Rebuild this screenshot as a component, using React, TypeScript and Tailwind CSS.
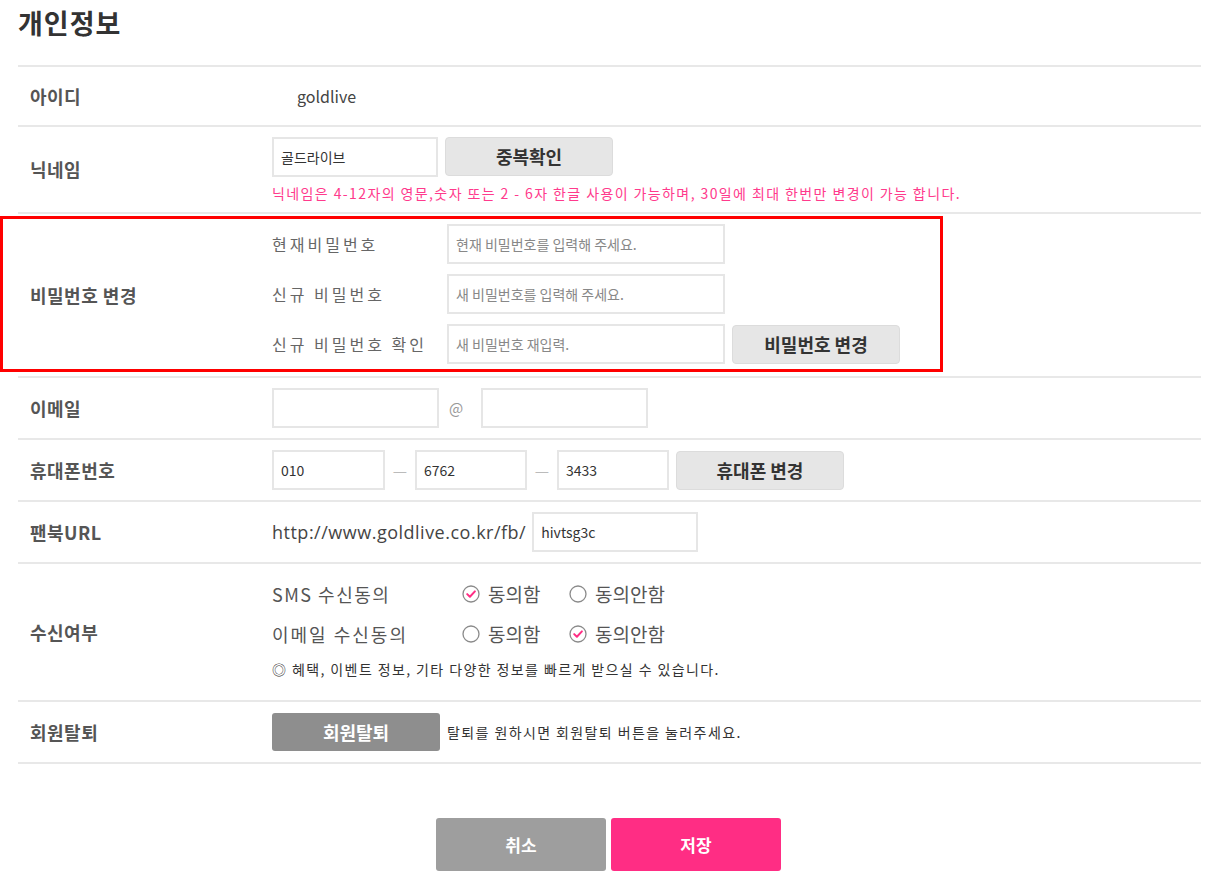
import React from 'react'

const font = { fontFamily: '"Noto Sans CJK KR", "Noto Sans", sans-serif' }

function Radio({ checked }: { checked: boolean }) {
  return (
    <svg width="18" height="18" viewBox="0 0 18 18" className="shrink-0">
      <circle cx="9" cy="9" r="8" fill="white" stroke="#8a8a8a" strokeWidth="1.3" />
      {checked && (
        <path d="M5.2 9.1 L7.9 11.7 L12.9 6.4" fill="none" stroke="#ff2d84" strokeWidth="2" strokeLinecap="round" strokeLinejoin="round" />
      )}
    </svg>
  )
}

function Row({ label, className, children }: { label: string; className: string; children?: React.ReactNode }) {
  return (
    <div className={`flex border-b-2 border-[#e8e8e8] ${className}`}>
      <div className="w-[254px] shrink-0 pl-[12px] flex items-center text-[18px] tracking-[0.5px] font-bold text-[#555]">{label}</div>
      <div className="flex-1 min-w-0">{children}</div>
    </div>
  )
}

function Field({ value, placeholder, w }: { value?: string; placeholder?: string; w: string }) {
  return (
    <div className={`${w} h-[40px] border-2 border-[#e6e6e6] bg-white flex items-center pl-[7px] text-[14px] ${value ? 'text-[#333]' : 'text-[#888]'}`}>
      {value ?? placeholder}
    </div>
  )
}

function GrayButton({ children, w }: { children: React.ReactNode; w: string }) {
  return (
    <button className={`${w} h-[39px] rounded-[4px] border border-[#dcdcdc] bg-[#e6e6e6] text-[18px] font-bold text-[#333]`}>
      {children}
    </button>
  )
}

export default function App() {
  return (
    <div style={font} className="relative w-[1217px] min-h-[889px] bg-white text-[#555]">
      <div className="px-[18px]">
        <h1 className="h-[65px] pt-[4px] text-[27px] tracking-[1px] leading-[38px] font-bold text-[#333]">개인정보</h1>

        <div className="w-[1183px] border-t-2 border-[#e8e8e8]">
          <Row label="아이디" className="h-[60px]">
            <div className="h-full flex items-center pl-[25px] text-[16px] text-[#444]">goldlive</div>
          </Row>

          <Row label="닉네임" className="h-[87px]">
            <div className="pt-[10px] flex gap-[7px]">
              <Field value="골드라이브" w="w-[166px]" />
              <GrayButton w="w-[168px]">중복확인</GrayButton>
            </div>
            <p className="mt-[7px] text-[14px] tracking-[1.4px] leading-[18px] text-[#ff3a8c]">
              닉네임은 4-12자의 영문,숫자 또는 2 - 6자 한글 사용이 가능하며, 30일에 최대 한번만 변경이 가능 합니다.
            </p>
          </Row>

          <Row label="비밀번호 변경" className="h-[164px]">
            <div className="pt-[10px] flex flex-col gap-[10px]">
              {[
                ['현재비밀번호', '현재 비밀번호를 입력해 주세요.', false],
                ['신규 비밀번호', '새 비밀번호를 입력해 주세요.', false],
                ['신규 비밀번호 확인', '새 비밀번호 재입력.', true],
              ].map(([lab, ph, btn]) => (
                <div key={lab as string} className="flex items-center">
                  <div className="w-[175px] text-[16px] tracking-[3px] text-[#666]">{lab}</div>
                  <Field placeholder={ph as string} w="w-[278px]" />
                  {btn && (
                    <div className="ml-[7px]">
                      <GrayButton w="w-[168px]">비밀번호 변경</GrayButton>
                    </div>
                  )}
                </div>
              ))}
            </div>
          </Row>

          <Row label="이메일" className="h-[62px]">
            <div className="h-full flex items-center gap-[10px]">
              <Field value="" w="w-[167px]" />
              <span className="w-[22px] text-[15px] text-[#999]">@</span>
              <Field value="" w="w-[167px]" />
            </div>
          </Row>

          <Row label="휴대폰번호" className="h-[62px]">
            <div className="h-full flex items-center">
              <Field value="010" w="w-[113px]" />
              <span className="w-[30px] text-center text-[#bbb]">—</span>
              <Field value="6762" w="w-[112px]" />
              <span className="w-[30px] text-center text-[#bbb]">—</span>
              <Field value="3433" w="w-[112px]" />
              <div className="ml-[7px]">
                <GrayButton w="w-[168px]">휴대폰 변경</GrayButton>
              </div>
            </div>
          </Row>

          <Row label="팬북URL" className="h-[62px]">
            <div className="h-full flex items-center gap-[6px]">
              <span className="text-[18px] tracking-[0.5px] text-[#444]" style={{ fontFamily: '"Open Sans", "Noto Sans", sans-serif' }}>
                http://www.goldlive.co.kr/fb/
              </span>
              <Field value="hivtsg3c" w="w-[166px]" />
            </div>
          </Row>

          <Row label="수신여부" className="h-[138px]">
            <div className="pt-[16px] text-[18px] text-[#555]">
              <div className="flex items-center h-[28px]">
                <span className="w-[190px] tracking-[1.5px]">SMS 수신동의</span>
                <div className="flex items-center gap-[8px] w-[107px] text-[19px]"><Radio checked />동의함</div>
                <div className="flex items-center gap-[8px] text-[19px]"><Radio checked={false} />동의안함</div>
              </div>
              <div className="flex items-center h-[28px] mt-[12px]">
                <span className="w-[190px] tracking-[2px]">이메일 수신동의</span>
                <div className="flex items-center gap-[8px] w-[107px] text-[19px]"><Radio checked={false} />동의함</div>
                <div className="flex items-center gap-[8px] text-[19px]"><Radio checked />동의안함</div>
              </div>
              <p className="mt-[12px] text-[14px] tracking-[1.4px] leading-[18px] text-[#333]">◎ 혜택, 이벤트 정보, 기타 다양한 정보를 빠르게 받으실 수 있습니다.</p>
            </div>
          </Row>

          <Row label="회원탈퇴" className="h-[62px]">
            <div className="h-full flex items-center gap-[7px]">
              <button className="w-[168px] h-[38px] rounded-[3px] bg-[#8e8e8e] text-[18px] font-bold text-white">회원탈퇴</button>
              <span className="text-[14px] tracking-[1.4px] text-[#333]">탈퇴를 원하시면 회원탈퇴 버튼을 눌러주세요.</span>
            </div>
          </Row>
        </div>

        <div className="mt-[54px] flex justify-center gap-[5px]">
          <button className="w-[170px] h-[53px] rounded-[3px] bg-[#9e9e9e] text-[17px] font-bold text-white">취소</button>
          <button className="w-[170px] h-[53px] rounded-[3px] bg-[#ff2d84] text-[17px] font-bold text-white">저장</button>
        </div>
      </div>

      {/* annotation box over the password section */}
      <div className="absolute left-0 top-[216px] w-[943px] h-[156px] border-[3px] border-[#ff0000] pointer-events-none" />
    </div>
  )
}
